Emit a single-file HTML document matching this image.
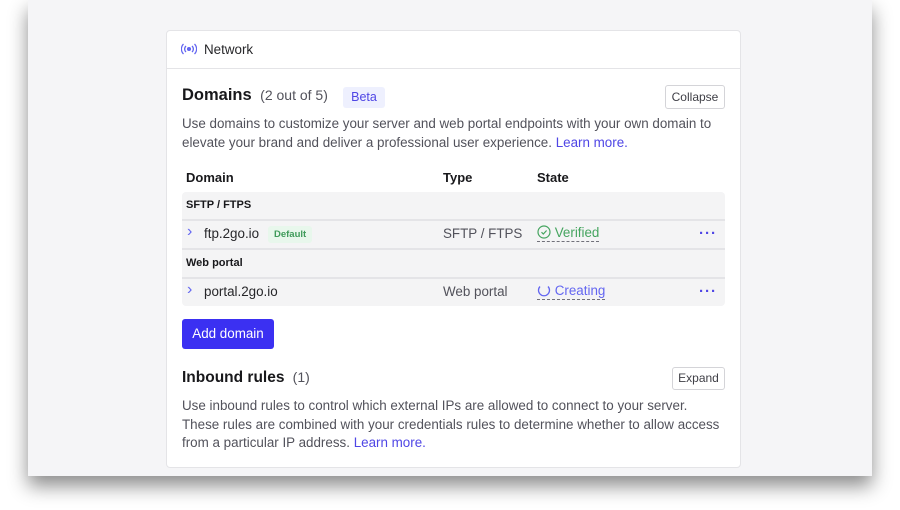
<!DOCTYPE html>
<html><head><style>
*{margin:0;padding:0;box-sizing:border-box}
body{width:900px;height:510px;background:#fff;font-family:"Liberation Sans",sans-serif;color:#27272a;position:relative;overflow:hidden}
.screen{position:absolute;left:28px;top:0;width:844px;height:476px;background:#f5f5f7;box-shadow:0 10px 18px rgba(0,0,0,.45)}
.card{position:absolute;left:166px;top:30px;width:575px;height:438px;background:#fff;border:1px solid #e4e4e7;border-radius:4px}
.a{position:absolute;white-space:nowrap}
.p{font-size:13.4px;color:#52525b;line-height:18.5px}
.link{color:#4f46e5}
.btn{position:absolute;border:1px solid #d4d4d8;border-radius:3px;font-size:12px;color:#3f3f46;text-align:center;background:#fff}
.band{position:absolute;left:15px;width:543px;background:#f4f4f5}
.line{position:absolute;left:15px;width:543px;height:2px;background:#e4e4e7}
.dots{position:absolute;color:#4f46e5;font-size:15px;font-weight:bold;letter-spacing:1px}
</style></head><body>
<div class="screen"></div>
<div class="card">
  <svg class="a" style="left:14px;top:12px" width="16" height="12" viewBox="0 0 16 12"><g fill="none" stroke="#6366f1" stroke-width="1.3"><circle cx="8" cy="6" r="1.4" fill="#6366f1"/><path d="M5 3a4 4 0 0 0 0 6M11 3a4 4 0 0 1 0 6M2.5 1a7 7 0 0 0 0 10M13.5 1a7 7 0 0 1 0 10"/></g></svg>
  <div class="a" style="left:37px;top:11px;font-size:13.4px;color:#27272a">Network</div>
  <div class="a" style="left:0;top:37px;width:573px;height:1px;background:#e4e4e7"></div>
  <div class="a" style="left:15px;top:55px;font-size:16.5px;font-weight:bold;color:#18181b">Domains <span style="font-weight:normal;font-size:14px;color:#52525b">&nbsp;(2 out of 5)</span></div>
  <div class="a" style="left:176px;top:56px;width:42px;height:21px;background:#eef0fe;border-radius:3px;color:#4f46e5;font-size:12.5px;text-align:center;line-height:21px">Beta</div>
  <div class="btn" style="left:498px;top:54px;width:60px;height:24px;line-height:22px">Collapse</div>
  <div class="a p" style="left:15px;top:84px">Use domains to customize your server and web portal endpoints with your own domain to<br>elevate your brand and deliver a professional user experience. <span class="link">Learn more.</span></div>
  <div class="a" style="left:19px;top:139px;font-size:13px;font-weight:bold;color:#18181b">Domain</div>
  <div class="a" style="left:276px;top:139px;font-size:13px;font-weight:bold;color:#18181b">Type</div>
  <div class="a" style="left:370px;top:139px;font-size:13px;font-weight:bold;color:#18181b">State</div>
  <div class="band" style="top:161px;height:114px;border-radius:4px"></div>
  <div class="line" style="top:188px"></div>
  <div class="line" style="top:217px"></div>
  <div class="line" style="top:246px"></div>
  <div class="a" style="left:19px;top:168px;font-size:11px;font-weight:bold;color:#18181b">SFTP / FTPS</div>
  <div class="a" style="left:20px;top:192px;font-size:16px;color:#6366f1">›</div>
  <div class="a" style="left:37px;top:195px;font-size:13.4px;color:#27272a">ftp.2go.io</div>
  <div class="a" style="left:101px;top:195px;height:17px;padding:0 6px;background:#e8f7ec;color:#3f9b5a;font-size:9.5px;font-weight:bold;line-height:17px;border-radius:3px">Default</div>
  <div class="a" style="left:276px;top:195px;font-size:13.4px;color:#52525b">SFTP / FTPS</div>
  <div class="a" style="left:370px;top:194px;font-size:13.4px;color:#45a45f;border-bottom:1px dashed #71717a;padding-bottom:1px">
    <svg width="14" height="14" viewBox="0 0 14 14" style="vertical-align:-2px"><circle cx="7" cy="7" r="6" fill="none" stroke="#45a45f" stroke-width="1.2"/><path d="M4.5 7.2l1.8 1.8 3.3-3.5" fill="none" stroke="#45a45f" stroke-width="1.2"/></svg> Verified</div>
  <div class="dots" style="left:532px;top:194px">···</div>
  <div class="a" style="left:19px;top:226px;font-size:11px;font-weight:bold;color:#18181b">Web portal</div>
  <div class="a" style="left:20px;top:250px;font-size:16px;color:#6366f1">›</div>
  <div class="a" style="left:37px;top:253px;font-size:13.4px;color:#27272a">portal.2go.io</div>
  <div class="a" style="left:276px;top:253px;font-size:13.4px;color:#52525b">Web portal</div>
  <div class="a" style="left:370px;top:252px;font-size:13.4px;color:#6366f1;border-bottom:1px dashed #71717a;padding-bottom:1px">
    <svg width="14" height="14" viewBox="0 0 14 14" style="vertical-align:-2px"><path d="M3 3.5A5.5 5.5 0 1 0 11 3.5" fill="none" stroke="#6366f1" stroke-width="1.3"/></svg> Creating</div>
  <div class="dots" style="left:532px;top:252px">···</div>
  <div class="a" style="left:15px;top:288px;width:92px;height:30px;background:#3b30f2;border-radius:3px;color:#fff;font-size:13.4px;text-align:center;line-height:30px">Add domain</div>
  <div class="a" style="left:15px;top:338px;font-size:15.5px;font-weight:bold;color:#18181b">Inbound rules <span style="font-weight:normal;font-size:14px;color:#52525b">&nbsp;(1)</span></div>
  <div class="btn" style="left:505px;top:336px;width:53px;height:23px;line-height:21px">Expand</div>
  <div class="a p" style="left:15px;top:366px">Use inbound rules to control which external IPs are allowed to connect to your server.<br>These rules are combined with your credentials rules to determine whether to allow access<br>from a particular IP address. <span class="link">Learn more.</span></div>
</div>
</body></html>
